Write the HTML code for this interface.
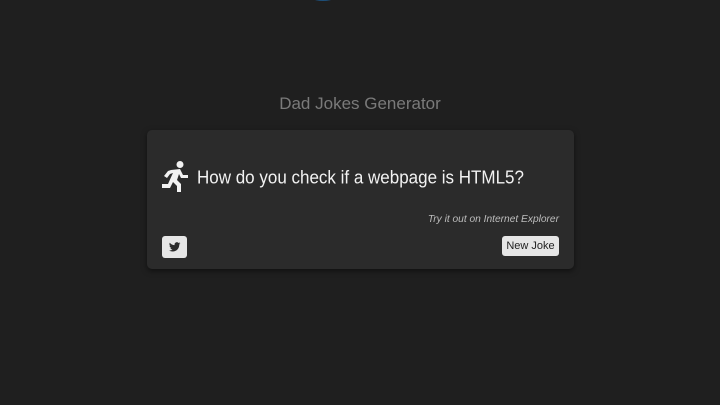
<!DOCTYPE html>
<html><head><style>
html,body{margin:0;width:720px;height:405px;background:#1f1f1f;overflow:hidden;font-family:"Liberation Sans",sans-serif}
.blob{position:absolute;left:314px;top:-3px;width:18px;height:4px;border-radius:50%;background:#1d4f7a}
h1{position:absolute;top:94px;left:0;width:720px;text-align:center;margin:0;font-weight:normal;font-size:17px;color:#7a7a7a}
.card{position:absolute;left:147px;top:130px;width:427px;height:139px;background:#2b2b2b;border-radius:5px;box-shadow:0 2px 6px rgba(0,0,0,.5)}
.q{position:absolute;left:50px;top:36px;font-size:17px;line-height:22px;color:#f2f2f2;transform:scaleY(1.08);transform-origin:left top}
.run{position:absolute;left:14px;top:30px}
.a{position:absolute;right:15px;top:84px;font-size:10.2px;font-style:italic;color:#bdbdbd}
.tw{position:absolute;left:15px;top:106px;width:25px;height:22px;background:#e6e6e6;border-radius:3px}
.nj{position:absolute;right:15px;top:106px;width:57px;height:20px;background:#e6e6e6;border-radius:3px;font-size:11px;color:#222;text-align:center;line-height:20px}
</style></head><body>
<div class="blob"></div>
<h1>Dad Jokes Generator</h1>
<div class="card">
<svg class="run" width="30" height="36" viewBox="0 0 30 36">
<circle cx="19" cy="4.5" r="3.5" fill="#f2f2f2"/>
<path d="M10 10 L19 9 L22 15 L27 15 L27 18 L20 18 L18 14 L16 20 L20 24 L20 32 L16 32 L16 26 L12 22 L9 28 L1 28 L1 24 L7 24 L11 15 L12 13 L9 14 L6 18 L3 16 L7 11 Z" fill="#f2f2f2"/>
</svg>
<div class="q">How do you check if a webpage is HTML5?</div>
<div class="a">Try it out on Internet Explorer</div>
<div class="tw"><svg width="25" height="22" viewBox="0 0 25 22"><path transform="translate(6.5,5) scale(0.52)" d="M23 4.5c-.8.4-1.7.6-2.6.7.9-.6 1.6-1.4 2-2.5-.9.5-1.9.9-2.9 1.1A4.5 4.5 0 0 0 11.8 8 12.8 12.8 0 0 1 2.5 3.3a4.5 4.5 0 0 0 1.4 6c-.7 0-1.400-.2-2-.6 0 2.2 1.6 4 3.6 4.4-.7.2-1.4.2-2 .1.6 1.8 2.2 3.1 4.2 3.1A9 9 0 0 1 1 18.2 12.8 12.8 0 0 0 7.9 20.2c8.300 0 12.8-6.9 12.8-12.8v-.6c.9-.6 1.6-1.4 2.3-2.3z" fill="#2b2b2b"/></svg></div>
<div class="nj">New Joke</div>
</div>
</body></html>
